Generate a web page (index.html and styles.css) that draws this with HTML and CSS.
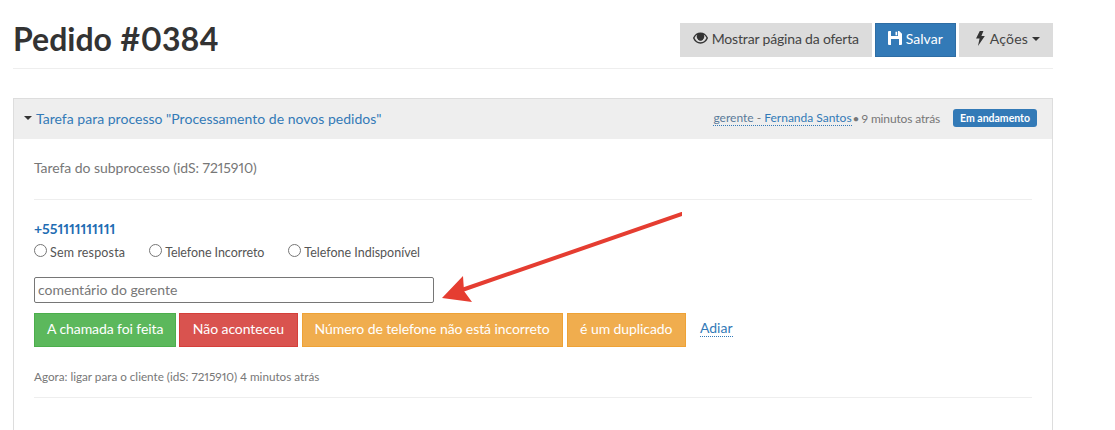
FILE: index.html
```html
<!DOCTYPE html>
<html lang="pt">
<head>
<meta charset="utf-8">
<title>Pedido #0384</title>
<link rel="stylesheet" href="styles.css">
</head>
<body>
<div class="page">
  <header class="page-header">
    <h1 class="title">Pedido #0384</h1>
    <div class="actions">
      <button class="btn btn-default btn-view">
        <svg class="icon eye" viewBox="0 0 16 12"><path fill="#333" d="M8 0C4.600 0 1.700 2 .2 5.400a1.400 1.400 0 0 0 0 1.200C1.700 10 4.600 12 8 12s6.300-2 7.800-5.400a1.400 1.400 0 0 0 0-1.200C14.300 2 11.400 0 8 0zm0 10.500C5.200 10.500 2.900 8.900 1.600 6 2.300 4.400 3.300 3.200 4.500 2.500A4 4 0 1 0 11.500 2.500C12.700 3.200 13.700 4.400 14.400 6 13.100 8.900 10.800 10.500 8 10.500z"/><path fill="#333" d="M8 3a3 3 0 1 0 .01 0zM6.800 3.500a1 1 0 0 1 0 2 1 1 0 0 1 0-2z"/></svg>
        Mostrar página da oferta
      </button>
      <button class="btn btn-primary">
        <svg class="icon save" viewBox="0 0 14 14"><path fill="#fff" fill-rule="evenodd" d="M1 0h10.200L14 2.800V13a1 1 0 0 1-1 1H1a1 1 0 0 1-1-1V1a1 1 0 0 1 1-1zM3 0v5h7V0zM7.500 .8h1.700v3.400H7.500zM3 8v6h8V8z"/></svg>
        Salvar
      </button>
      <button class="btn btn-default btn-more">
        <svg class="icon bolt" viewBox="0 0 9 14"><path fill="#333" d="M4.300 0h3.400L5.800 4.700H9L2.600 14l1.500-7H.8z"/></svg>
        Ações <span class="caret"></span>
      </button>
    </div>
  </header>

  <section class="panel">
    <div class="panel-heading">
      <div class="panel-title"><span class="caret caret-dark"></span> <a class="link">Tarefa para processo "Processamento de novos pedidos"</a></div>
      <div class="panel-meta">
        <span class="author"><span class="grey-link">gerente</span> - <a class="link">Fernanda Santos</a></span>
        <span class="dot">•</span>
        <span class="time">9 minutos atrás</span>
        <span class="badge">Em andamento</span>
      </div>
    </div>
    <div class="panel-body">
      <p class="subprocess">Tarefa do subprocesso (idS: 7215910)</p>
      <hr class="rule rule-top">
      <div class="phone">+551111111111</div>
      <div class="radios">
        <label class="radio radio-wide"><span class="radio-dot"></span>Sem resposta</label>
        <label class="radio radio-tight"><span class="radio-dot"></span>Telefone Incorreto</label>
        <label class="radio"><span class="radio-dot"></span>Telefone Indisponível</label>
      </div>
      <input class="comment" type="text" placeholder="comentário do gerente">
      <div class="call-buttons">
        <button class="btn btn-call btn-success">A chamada foi feita</button>
        <button class="btn btn-call btn-danger">Não aconteceu</button>
        <button class="btn btn-call btn-warning">Número de telefone não está incorreto</button>
        <button class="btn btn-call btn-warning btn-dup">é um duplicado</button>
        <a class="link postpone">Adiar</a>
      </div>
      <p class="now">Agora: ligar para o cliente (idS: 7215910) 4 minutos atrás</p>
      <hr class="rule">
    </div>
  </section>
</div>
<svg class="arrow" viewBox="0 0 260 100" width="260" height="100">
  <path fill="none" stroke="#e53d31" stroke-width="4" stroke-linecap="round" d="M260 4 40 80"/>
  <path fill="#e53d31" d="M20 88 41 66 42 81 50 92z"/>
</svg>
</body>
</html>
```
FILE: styles.css
```css
* { box-sizing: border-box; }
html, body { margin: 0; padding: 0; background: #fff; overflow: hidden; }
body {
  height: 430px;
  position: relative;
  font-family: Lato, "Open Sans", sans-serif;
  font-size: 14px;
  font-variant-numeric: proportional-nums;
  color: #555;
}
.page { width: 1040px; margin-left: 13px; }
.page-header {
  height: 69px;
  display: flex;
  justify-content: space-between;
  align-items: flex-start;
  border-bottom: 1px solid #eee;
}
.title {
  margin: 19px 0 0;
  font-size: 32px;
  line-height: 40px;
  font-weight: 700;
  color: #333;
}
.actions { display: flex; gap: 3px; margin-top: 23px; }
.btn {
  font: inherit;
  height: 34px;
  padding: 0 12px 3px;
  border: 1px solid transparent;
  border-radius: 0;
  display: inline-flex;
  align-items: center;
  white-space: nowrap;
}
.btn-default { background: #dcdcdc; color: #444; }
.btn-primary { background: #337ab7; border-color: #2e6da4; color: #fff; }
.btn-view { letter-spacing: -.17px; }
.btn-more { padding-left: 14px; padding-right: 12px; letter-spacing: .2px; }
.icon { display: block; margin-right: 4px; }
.eye { width: 15px; height: 12px; margin-top: -1px; }
.save { width: 14px; height: 14px; margin-top: -1px; }
.bolt { width: 10px; height: 15px; margin: -1px 5px 0 1px; }
.caret {
  display: inline-block;
  width: 0; height: 0;
  border-top: 4px solid #333;
  border-left: 4px solid transparent;
  border-right: 4px solid transparent;
  margin-left: 4px;
}
.panel {
  margin-top: 29px;
  border: 1px solid #ddd;
  border-bottom: 0;
  height: 332px;
}
.panel-heading {
  height: 40px;
  background: #eee;
  padding: 0 15px 2px 10px;
  display: flex;
  justify-content: space-between;
  align-items: center;
}
.link { color: #337ab7; }
.panel-title { font-size: 14px; letter-spacing: .02px; display: flex; align-items: center; }
.caret-dark { margin: 0 4px 0 0; }
.panel-meta { font-size: 12px; color: #777; display: flex; align-items: center; white-space: pre; }
.author { border-bottom: 1px dotted #337ab7; color: #777; }
.grey-link { color: #5a7a99; }
.dot { margin: 0 2px 0 1px; }
.time { letter-spacing: -.15px; }
.badge {
  margin-left: 13px;
  background: #337ab7;
  color: #fff;
  font-size: 10.500px;
  font-weight: 700;
  padding: 2px 7px;
  height: 18px;
  line-height: 14px;
  border-radius: 3px;
}
.panel-body { padding: 0 20px; }
.subprocess { margin: 20px 0 0; line-height: 18px; letter-spacing: -.05px; color: #777; }
.rule { border: 0; border-top: 1px solid #eee; margin: 0; }
.rule-top { margin-top: 22px; }
.phone { margin-top: 20px; font-weight: 700; color: #1f6db3; line-height: 17px; }
.radios { display: flex; gap: 24px; margin-top: 5px; font-size: 12.500px; height: 20px; align-items: center; }
.radio { display: flex; align-items: center; color: #555; }
.radio-wide { letter-spacing: .15px; }
.radio-tight { letter-spacing: -.06px; }
.radio-dot {
  width: 13px; height: 13px;
  border: 1px solid #767676;
  border-radius: 50%;
  margin-right: 3px;
  margin-top: -3px;
}
.comment {
  display: block;
  margin-top: 15px;
  width: 400px;
  height: 26px;
  padding: 0 3px 2px;
  border: 1px solid #767676;
  border-radius: 2px;
  font: 14px Lato, "Open Sans", sans-serif;
  color: #555;
}
.comment::placeholder { color: #777; opacity: 1; }
.call-buttons { display: flex; gap: 3px; margin-top: 10px; align-items: center; }
.btn-call { color: #fff; letter-spacing: -.08px; }
.btn-success { background: #5cb85c; border-color: #4cae4c; }
.btn-danger { background: #d9534f; border-color: #d43f3a; padding-left: 12.500px; padding-right: 12.500px; }
.btn-warning { background: #f0ad4e; border-color: #eea236; margin-left: 1px; }
.btn-dup { padding-left: 12.500px; padding-right: 12.500px; }
.postpone { margin-left: 11px; margin-bottom: 4px; border-bottom: 1px dotted #337ab7; line-height: 17px; }
.now { margin: 22px 0 0; font-size: 11.700px; line-height: 15px; color: #777; }
.now + .rule { margin-top: 13px; }
.arrow { position: absolute; left: 422px; top: 210px; }
```
